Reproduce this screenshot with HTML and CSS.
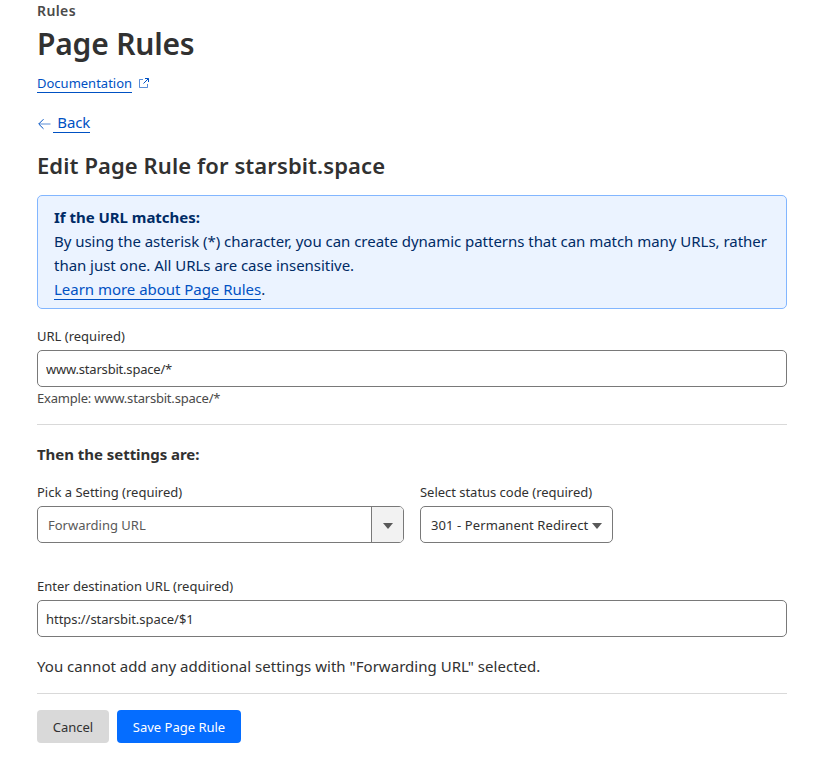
FILE: index.html
```
<!DOCTYPE html>
<html lang="en">
<head>
<meta charset="utf-8">
<title>Page Rules</title>
<link rel="stylesheet" href="styles.css">
</head>
<body>
<main class="page">
  <p class="eyebrow">Rules</p>
  <h1 class="title">Page Rules</h1>
  <p class="docs"><a class="link" href="#">Documentation</a><svg class="icon-external" viewBox="0 0 12 12" aria-hidden="true"><path class="soft" d="M5 2.5H1.5v8h8V7"/><path d="M7 1.5h3.5V5M10.5 1.5L5.5 6.5"/></svg></p>
  <p class="back"><svg class="icon-arrow" viewBox="0 0 14 12" aria-hidden="true"><path class="soft" d="M13.5 6H2"/><path d="M6.5 1.2L1.7 6L6.5 10.8"/></svg><a class="link" href="#">&nbsp;Back</a></p>
  <h2 class="subtitle">Edit Page Rule for starsbit.space</h2>

  <section class="notice">
    <strong>If the URL matches:</strong>
    <p>By using the asterisk (*) character, you can create dynamic patterns that can match many URLs, rather than just one. All URLs are case insensitive.</p>
    <p><a class="link" href="#">Learn more about Page Rules</a>.</p>
  </section>

  <form>
    <div class="field field-url">
      <label for="url">URL (required)</label>
      <input class="control tight" id="url" type="text" value="www.starsbit.space/*">
      <p class="hint tight">Example: www.starsbit.space/*</p>
    </div>
    <hr>
    <h3 class="section-title">Then the settings are:</h3>
    <div class="row">
      <div class="field field-setting">
        <label>Pick a Setting (required)</label>
        <div class="control combo">
          <span class="combo-value">Forwarding URL</span>
          <span class="combo-toggle"><svg class="caret" viewBox="0 0 10 6"><path d="M0 0h10L5 6z"/></svg></span>
        </div>
      </div>
      <div class="field field-status">
        <label>Select status code (required)</label>
        <div class="control select">
          <span>301 - Permanent Redirect</span>
          <svg class="caret" viewBox="0 0 10 6"><path d="M0 0h10L5 6z"/></svg>
        </div>
      </div>
    </div>
    <div class="field field-destination">
      <label for="destination">Enter destination URL (required)</label>
      <input class="control destination" id="destination" type="text" value="https://starsbit.space/$1">
    </div>
    <p class="message">You cannot add any additional settings with "Forwarding URL" selected.</p>
    <hr class="hr-actions">
    <div class="actions">
      <button class="button" type="button">Cancel</button>
      <button class="button button-primary" type="button">Save Page Rule</button>
    </div>
  </form>
</main>
</body>
</html>
```
FILE: styles.css
```
* { box-sizing: border-box; }

body {
  margin: 0;
  background: #fff;
  color: #313131;
  font: 15px/24px "Noto Sans", sans-serif;
}

p, h1, h2, h3 { margin: 0; }

.page {
  width: 750px;
  margin-left: 37px;
  padding-top: 1px;
}

.eyebrow {
  color: #4a4a4a;
  font-size: 14px;
  font-weight: 600;
  line-height: 20px;
  letter-spacing: 0.4px;
}

.title {
  margin-top: 3px;
  font-size: 30px;
  font-weight: 600;
  line-height: 40px;
  letter-spacing: -0.2px;
}

.link {
  border-bottom: 1px solid #0051c3;
  color: #0051c3;
  text-decoration: none;
}

.docs {
  display: flex;
  align-items: center;
  gap: 6px;
  height: 20px;
  margin-top: 9px;
  font-size: 13px;
  line-height: 20px;
}

.docs .link, .back .link { line-height: normal; }
.back .link { letter-spacing: -0.1px; padding-left: 0.5px; }

.icon-external { width: 12px; height: 12px; }

.icon-arrow {
  width: 14px;
  height: 12px;
  margin: 3px 2px 0 0;
}

.icon-external, .icon-arrow {
  fill: none;
  stroke: #0051c3;
}

.soft { opacity: 0.65; }

.back {
  display: flex;
  align-items: center;
  height: 24px;
  margin-top: 17px;
}

.subtitle {
  margin-top: 16px;
  font-size: 22px;
  font-weight: 600;
  line-height: 30px;
  letter-spacing: 0.09px;
}

.notice {
  height: 114px;
  margin-top: 15px;
  padding: 9px 16px 7px;
  border: 1px solid #82b6ff;
  border-radius: 5px;
  background: #ebf3ff;
  color: #002b66;
  letter-spacing: -0.03px;
}

.notice strong { display: block; }

.field {
  font-size: 13px;
  line-height: 20px;
}

.field label { display: block; }
.field-url { margin-top: 17px; }
.field-setting { width: 367px; }
.field-status { width: 193px; }
.field-status label { letter-spacing: -0.03px; }
.field-destination { margin-top: 33px; }

.control {
  display: block;
  width: 100%;
  height: 37px;
  margin-top: 4px;
  padding: 0 8px;
  border: 1px solid #797979;
  border-radius: 5px;
  background: #fff;
  color: #313131;
  font: 13px/20px "Noto Sans", sans-serif;
}

.tight { letter-spacing: -0.2px; }
.destination { letter-spacing: -0.05px; }

.hint {
  margin-top: 1px;
  color: #4a4a4a;
}

hr {
  height: 1px;
  margin: 16px 0 0;
  border: 0;
  background: #d9d9d9;
}

.section-title {
  margin-top: 17px;
  font-size: 15px;
  font-weight: 700;
  letter-spacing: -0.04px;
}

.row {
  display: flex;
  gap: 16px;
  margin-top: 16px;
}

.combo {
  display: flex;
  padding: 0;
  overflow: hidden;
}

.combo-value {
  flex: 1;
  padding: 8px 10px;
  color: #595959;
}

.combo-toggle {
  display: flex;
  align-items: center;
  justify-content: center;
  width: 32px;
  border-left: 1px solid #797979;
  background: #f2f2f2;
}

.caret {
  width: 10px;
  height: 6px;
  margin-top: 3px;
  fill: #595959;
}

.select {
  display: flex;
  align-items: center;
  justify-content: space-between;
  padding: 0 10px;
  letter-spacing: 0.1px;
  white-space: nowrap;
}

.message {
  margin-top: 17px;
  letter-spacing: 0.03px;
}

.hr-actions { margin-top: 15px; }

.actions {
  display: flex;
  gap: 8px;
  margin-top: 16px;
}

.button {
  width: 72px;
  height: 33px;
  padding: 0;
  border: 0;
  border-radius: 4px;
  background: #d9d9d9;
  color: #313131;
  font: 13px/20px "Noto Sans", sans-serif;
}

.button-primary {
  width: 124px;
  background: #056dff;
  color: #fff;
}
```
